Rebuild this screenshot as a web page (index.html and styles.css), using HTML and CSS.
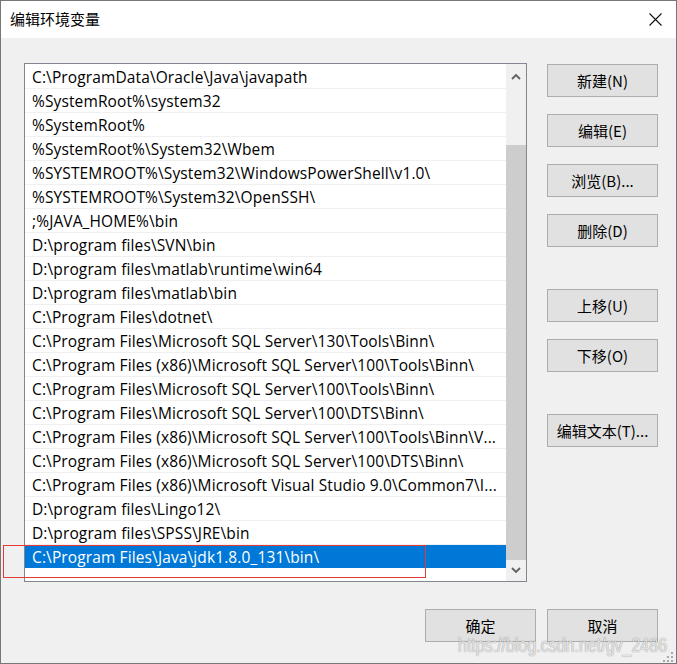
FILE: index.html
```html
<!DOCTYPE html>
<html lang="zh-CN">
<head>
<meta charset="utf-8">
<title>编辑环境变量</title>
<link rel="stylesheet" href="styles.css">
</head>
<body>
<div class="window">
  <div class="titlebar">
    <span class="title">编辑环境变量</span>
    <svg class="close" width="13" height="13" viewBox="0 0 13 13"><path d="M0.5 0.5 L12.5 12.5 M12.5 0.5 L0.5 12.5" stroke="#111" stroke-width="1.1" fill="none"/></svg>
  </div>
  <div class="content">
    <div class="main">
      <div class="listbox">
        <ul class="rows">
          <li class="row">C:\ProgramData\Oracle\Java\javapath</li>
          <li class="row">%SystemRoot%\system32</li>
          <li class="row">%SystemRoot%</li>
          <li class="row">%SystemRoot%\System32\Wbem</li>
          <li class="row">%SYSTEMROOT%\System32\WindowsPowerShell\v1.0\</li>
          <li class="row">%SYSTEMROOT%\System32\OpenSSH\</li>
          <li class="row">;%JAVA_HOME%\bin</li>
          <li class="row">D:\program files\SVN\bin</li>
          <li class="row">D:\program files\matlab\runtime\win64</li>
          <li class="row">D:\program files\matlab\bin</li>
          <li class="row">C:\Program Files\dotnet\</li>
          <li class="row">C:\Program Files\Microsoft SQL Server\130\Tools\Binn\</li>
          <li class="row">C:\Program Files (x86)\Microsoft SQL Server\100\Tools\Binn\</li>
          <li class="row">C:\Program Files\Microsoft SQL Server\100\Tools\Binn\</li>
          <li class="row">C:\Program Files\Microsoft SQL Server\100\DTS\Binn\</li>
          <li class="row">C:\Program Files (x86)\Microsoft SQL Server\100\Tools\Binn\V...</li>
          <li class="row">C:\Program Files (x86)\Microsoft SQL Server\100\DTS\Binn\</li>
          <li class="row">C:\Program Files (x86)\Microsoft Visual Studio 9.0\Common7\I...</li>
          <li class="row">D:\program files\Lingo12\</li>
          <li class="row">D:\program files\SPSS\JRE\bin</li>
          <li class="row selected">C:\Program Files\Java\jdk1.8.0_131\bin\</li>
        </ul>
        <div class="scrollbar">
          <div class="sb-arrow sb-up">
            <svg width="10" height="7" viewBox="0 0 10 7"><path d="M1 6 L5 2 L9 6" stroke="#606060" stroke-width="1.8" fill="none"/></svg>
          </div>
          <div class="sb-track"><div class="sb-thumb"></div></div>
          <div class="sb-arrow sb-down">
            <svg width="10" height="7" viewBox="0 0 10 7"><path d="M1 1 L5 5 L9 1" stroke="#606060" stroke-width="1.8" fill="none"/></svg>
          </div>
        </div>
      </div>
      <div class="side">
        <div class="btn-group">
          <button class="btn">新建(N)</button>
          <button class="btn">编辑(E)</button>
          <button class="btn">浏览(B)...</button>
          <button class="btn">删除(D)</button>
        </div>
        <div class="btn-group">
          <button class="btn">上移(U)</button>
          <button class="btn">下移(O)</button>
        </div>
        <div class="btn-group">
          <button class="btn">编辑文本(T)...</button>
        </div>
      </div>
    </div>
    <div class="footer">
      <button class="btn">确定</button>
      <button class="btn">取消</button>
    </div>
  </div>
  <div class="mark-box"></div>
  <div class="watermark">https://blog.csdn.net/gv_2486</div>
  <svg class="grip" width="10" height="10" viewBox="0 0 10 10">
    <rect x="8" y="0" width="2" height="2" fill="#a8a8a8"/>
    <rect x="4" y="4" width="2" height="2" fill="#a8a8a8"/>
    <rect x="8" y="4" width="2" height="2" fill="#a8a8a8"/>
    <rect x="0" y="8" width="2" height="2" fill="#a8a8a8"/>
    <rect x="4" y="8" width="2" height="2" fill="#a8a8a8"/>
    <rect x="8" y="8" width="2" height="2" fill="#a8a8a8"/>
  </svg>
</div>
</body>
</html>
```

FILE: styles.css
```css
* { box-sizing: border-box; }
html, body {
  margin: 0;
  padding: 0;
  width: 677px;
  height: 664px;
  overflow: hidden;
  background: #f0f0f0;
}
body {
  font-family: "Noto Sans CJK SC", "Open Sans", sans-serif;
  font-size: 15px;
  color: #000;
}
.window {
  position: relative;
  width: 677px;
  height: 664px;
  border: 1px solid #777;
  background: #f0f0f0;
  display: flex;
  flex-direction: column;
}
.titlebar {
  height: 37px;
  background: #fff;
  display: flex;
  align-items: center;
  justify-content: space-between;
  padding: 0 14px 1px 9px;
  flex-shrink: 0;
}
.title {
  font-size: 15px;
  line-height: 20px;
}
.close { display: block; }
.content {
  padding: 25px 18px 0 23px;
  display: flex;
  flex-direction: column;
}
.main {
  display: flex;
  gap: 20px;
}
.listbox {
  width: 503px;
  height: 519px;
  border: 1px solid #828790;
  background: #fff;
  display: flex;
}
.rows {
  list-style: none;
  margin: 0;
  padding: 1px 0 0 0;
  width: 481px;
}
.row {
  height: 24px;
  line-height: 21px;
  padding: 2px 6px 0 7px;
  border-bottom: 1px solid #f0f0f0;
  white-space: nowrap;
  overflow: hidden;
  text-overflow: clip;
  font-family: "Open Sans", "Noto Sans CJK SC", sans-serif;
  font-size: 15.5px;
  letter-spacing: 0.12px;
}
.row.selected {
  background: #0078d7;
  color: #fff;
  border-bottom-color: #fff;
}
.scrollbar {
  width: 20px;
  background: #f0f0f0;
  display: flex;
  flex-direction: column;
}
.sb-arrow {
  display: flex;
  align-items: center;
  justify-content: center;
  padding-right: 1px;
}
.sb-up { height: 24px; }
.sb-down { height: 21px; }
.sb-track {
  flex: 1;
  padding-top: 57px;
}
.sb-thumb {
  height: 415px;
  background: #cdcdcd;
}
.side {
  display: flex;
  flex-direction: column;
  gap: 42px;
  padding-top: 1px;
}
.btn-group {
  display: flex;
  flex-direction: column;
  gap: 17px;
}
.btn {
  width: 111px;
  height: 33px;
  background: #e1e1e1;
  border: 1px solid #adadad;
  font-family: "Noto Sans CJK SC", "Open Sans", sans-serif;
  font-size: 15px;
  color: #000;
  padding: 0;
  margin: 0;
  line-height: 20px;
}
.footer {
  display: flex;
  justify-content: flex-end;
  gap: 11px;
  margin-top: 27px;
}
.mark-box {
  position: absolute;
  left: 2px;
  top: 544px;
  width: 423px;
  height: 33px;
  border: 1px solid #e53935;
}
.watermark {
  position: absolute;
  left: 457px;
  top: 632px;
  font-family: "Liberation Sans", Arial, sans-serif;
  font-size: 16px;
  line-height: 20px;
  color: rgba(255, 255, 255, 0.75);
  text-shadow: 0 0 1px rgba(0, 0, 0, 0.35), 0 0 1px rgba(0, 0, 0, 0.2);
  transform: scaleY(1.25);
  transform-origin: top left;
  white-space: nowrap;
}
.grip {
  position: absolute;
  right: 3px;
  bottom: 1px;
}
```
